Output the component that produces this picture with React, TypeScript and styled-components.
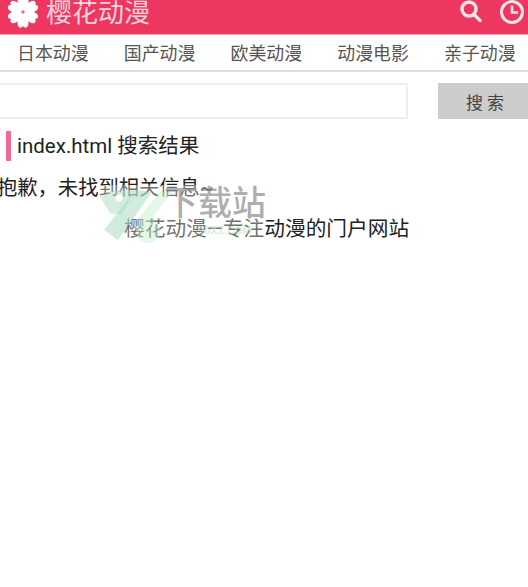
import React from "react";
import styled, { createGlobalStyle } from "styled-components";

const Global = createGlobalStyle`
  html, body { margin: 0; padding: 0; background: #fff; overflow: hidden; }
  body { font-family: Roboto, "Noto Sans CJK SC", sans-serif; }
`;
const Page = styled.div`
  position: relative;
  width: 528px;
  height: 587px;
  overflow: hidden;
  background: #fff;
`;
const Header = styled.header`
  height: 35px;
  background: #ee3760;
  border-bottom: 1px solid #f4a3b6;
  box-sizing: border-box;
  display: flex;
  align-items: flex-start;
  padding-left: 6px;
  overflow: hidden;
`;
const Logo = styled.svg`
  width: 34px;
  height: 34px;
  margin-top: -5px;
  flex: none;
`;
const Title = styled.div`
  margin-left: 6px;
  margin-top: -3px;
  font-size: 26px;
  line-height: 32px;
  color: #fbd5de;
  flex: 1;
`;
const IconBtn = styled.svg<{ $mr: number }>`
  width: 26px;
  height: 26px;
  margin-top: -1px;
  flex: none;
  margin-right: ${(p) => p.$mr}px;
`;
const Nav = styled.nav`
  height: 37px;
  border-bottom: 2px solid #ddd;
  box-sizing: border-box;
  display: flex;
  align-items: center;
  padding: 2px 0 0 17px;
  gap: 35.2px;
  white-space: nowrap;
`;
const NavItem = styled.a`
  font-size: 17.9px;
  line-height: 34px;
  color: #555;
`;
const SearchRow = styled.form`
  display: flex;
  margin: 11px 0 0 -10px;
  height: 36px;
`;
const SearchInput = styled.input`
  width: 418px;
  height: 36px;
  box-sizing: border-box;
  border: 2px solid #eee;
  background: #fff;
  outline: none;
  flex: none;
`;
const SearchButton = styled.button`
  margin-left: 30px;
  width: 90px;
  height: 36px;
  flex: none;
  border: none;
  background: #ccc;
  color: #444;
  font-family: inherit;
  font-size: 17px;
  padding: 0 0 0 4px;
`;
const Heading = styled.h2`
  margin: 12px 0 0 6px;
  height: 30px;
  border-left: 5px solid #ee6a9a;
  padding-left: 6px;
  font-size: 20.5px;
  font-weight: 400;
  line-height: 31px;
  color: #222;
`;
const Message = styled.p`
  margin: 11px 0 0 -3px;
  font-size: 20.3px;
  line-height: 32px;
  color: #222;
  white-space: nowrap;
`;
const Footer = styled.p`
  margin: 9px 0 0;
  padding-left: 124px;
  font-size: 20.7px;
  line-height: 32px;
  color: #222;
  white-space: nowrap;
`;
const Watermark = styled.div`
  position: absolute;
  left: 98px;
  top: 185px;
  width: 168px;
  height: 58px;
  background: rgba(255, 255, 255, 0.36);
  pointer-events: none;
`;
const WatermarkArt = styled.svg`
  position: absolute;
  left: 0;
  top: 0;
`;
const WatermarkText = styled.span`
  position: absolute;
  left: 66px;
  top: -4px;
  font-size: 34px;
  line-height: 44px;
  font-weight: 500;
  color: rgba(120, 120, 120, 0.6);
  white-space: nowrap;
`;
const WatermarkSmall = styled.span`
  position: absolute;
  left: 100px;
  top: 39px;
  font-size: 11px;
  line-height: 14px;
  font-weight: 700;
  color: rgba(190, 230, 190, 0.6);
  white-space: nowrap;
`;

const petals = [0, 60, 120, 180, 240, 300];
const navItems = ["日本动漫", "国产动漫", "欧美动漫", "动漫电影", "亲子动漫"];

export default function App() {
  return (
    <Page>
      <Global />
      <Header>
        <Logo viewBox="0 0 32 32">
          {petals.map((a) => (
            <path
              key={a}
              d="M16 15 C12 12 9.5 7 11.5 2.5 C13 0.5 15 1 16 3 C17 1 19 0.5 20.5 2.5 C22.5 7 20 12 16 15 Z"
              fill="#fff"
              transform={`rotate(${a} 16 16)`}
            />
          ))}
          <circle cx="16" cy="16" r="3.4" fill="#fff" />
          <circle cx="16" cy="16" r="1.6" fill="#e0708a" />
        </Logo>
        <Title>樱花动漫</Title>
        <IconBtn $mr={15} viewBox="0 0 26 26" fill="none" stroke="#fbe3e8" strokeWidth="3.4">
          <circle cx="11" cy="10" r="7" />
          <path d="M16 15.5 L22 21.5" strokeLinecap="round" />
        </IconBtn>
        <IconBtn $mr={3} viewBox="0 0 26 26" fill="none" stroke="#fbe3e8" strokeWidth="3">
          <circle cx="13" cy="13" r="10.5" />
          <path d="M13 6.5 V13.5 H19" strokeWidth="2.6" />
        </IconBtn>
      </Header>
      <Nav>
        {navItems.map((n) => (
          <NavItem key={n}>{n}</NavItem>
        ))}
      </Nav>
      <SearchRow>
        <SearchInput />
        <SearchButton type="button">搜 索</SearchButton>
      </SearchRow>
      <Heading>index.html 搜索结果</Heading>
      <Message>抱歉，未找到相关信息~</Message>
      <Footer>樱花动漫—专注动漫的门户网站</Footer>
      <Watermark>
        <WatermarkArt width="90" height="58" viewBox="0 0 90 58">
          <path d="M2 12 L18 5 L37 5 L24 30 L12 28 Z" fill="rgba(170,220,195,0.5)" />
          <path d="M37 5 L54 7 L20 55 L6 45 Z" fill="rgba(170,220,195,0.55)" />
          <path d="M62 7 L74 7 L50 38 L38 36 Z" fill="rgba(190,235,195,0.4)" />
          <circle cx="50" cy="46" r="12" fill="rgba(190,235,195,0.4)" />
          <circle cx="21" cy="13" r="3.5" fill="#fff" />
        </WatermarkArt>
        <WatermarkText>下载站</WatermarkText>
        <WatermarkSmall>96XZ.COM</WatermarkSmall>
      </Watermark>
    </Page>
  );
}
